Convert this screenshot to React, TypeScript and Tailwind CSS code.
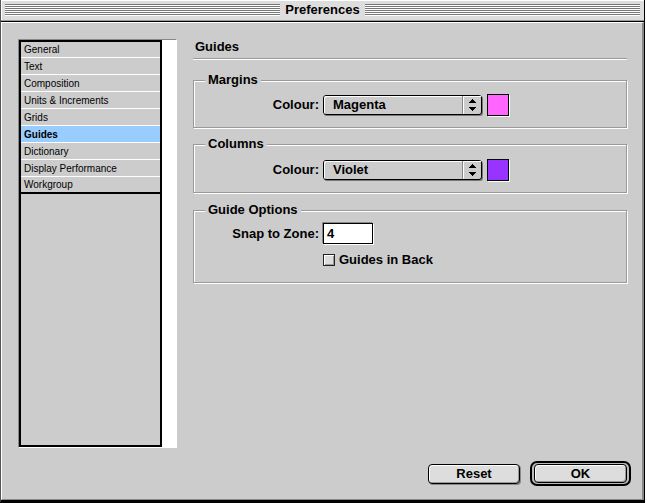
import React from "react";

const categories = [
  "General",
  "Text",
  "Composition",
  "Units & Increments",
  "Grids",
  "Guides",
  "Dictionary",
  "Display Performance",
  "Workgroup",
];

// striped filler of the title bar
function Stripes() {
  return (
    <div className="flex-1 flex flex-col">
      {[0, 1, 2, 3, 4, 5].map((i) => (
        <div key={i} className="h-[2px] border-t border-[#777777] bg-white" />
      ))}
    </div>
  );
}

function PopupArrows() {
  return (
    <svg width="7" height="12" viewBox="0 0 7 12" shapeRendering="crispEdges">
      <path d="M3 0h1v1h1v1h1v1h1v1H0V3h1V2h1V1h1z" fill="#000" />
      <path d="M0 8h7v1H6v1H5v1H4v1H3v-1H2v-1H1V9H0z" fill="#000" />
    </svg>
  );
}

function Popup({ value }: { value: string }) {
  return (
    <div className="flex h-[20px] w-[159px] rounded-[3px] border border-black bg-[#cccccc] shadow-[1px_1px_0_#777777]">
      <div className="flex-1 flex items-center pl-[9px] rounded-l-[2px] shadow-[inset_1px_1px_0_#ffffff]">
        {value}
      </div>
      <div className="w-[19px] flex items-center justify-center border-l border-[#888888] shadow-[inset_1px_1px_0_#ffffff]">
        <PopupArrows />
      </div>
    </div>
  );
}

function GroupBox({
  label,
  className,
  children,
}: {
  label: string;
  className: string;
  children: React.ReactNode;
}) {
  return (
    <div
      className={`relative w-[434px] border border-[#999999] shadow-[inset_1px_1px_0_#ffffff,1px_1px_0_#ffffff] ${className}`}
    >
      {/* legend sits over the top rule */}
      <span className="absolute -top-[9px] left-[11px] bg-[#cccccc] px-[3px] leading-[16px]">
        {label}
      </span>
      {children}
    </div>
  );
}

function ColourRow({ value, swatch }: { value: string; swatch: string }) {
  return (
    <div className="flex items-center">
      <div className="w-[125px] text-right">Colour:</div>
      <div className="ml-[4px]">
        <Popup value={value} />
      </div>
      <div
        className={`ml-[5px] h-[22px] w-[22px] border border-black shadow-[1px_1px_0_#ffffff] ${swatch}`}
      />
    </div>
  );
}

export default function App() {
  return (
    <div className="w-[647px] h-[503px] bg-white font-['Liberation_Sans',Arial,sans-serif] text-black">
      <div className="w-[645px] h-[503px] flex flex-col border-l border-l-[#555555] border-r border-r-black border-b-[3px] border-b-black">
        {/* title bar */}
        <div className="h-[21px] flex items-center gap-[4px] px-[4px] bg-[#dddddd] border-b border-[#999999] shadow-[inset_1px_1px_0_#ffffff]">
          <Stripes />
          <div className="text-[13px] font-bold leading-[16px] px-[1px]">Preferences</div>
          <Stripes />
        </div>
        <div className="h-px bg-black" />

        {/* body */}
        <div className="flex-1 flex flex-col bg-[#cccccc] border-t border-l border-white border-r-2 border-r-[#888888] border-b border-b-[#888888] pl-[16px] pt-[16px] pr-[11px]">
          <div className="flex items-start">
            {/* category list */}
            <div className="flex h-[409px] w-[159px] border-t border-l border-[#888888] border-b border-r border-b-white border-r-white">
              <div className="w-[143px] h-full border-2 border-black bg-[#cccccc] text-[10px]">
                {categories.map((c, i) => (
                  <div
                    key={c}
                    className={`${i === 0 ? "h-[16px]" : "h-[17px]"} flex items-center pl-[3px] ${
                      i === categories.length - 1
                        ? "border-b-2 border-black"
                        : "border-b border-white"
                    } ${c === "Guides" ? "bg-[#99ccff] font-bold" : ""}`}
                  >
                    {c}
                  </div>
                ))}
              </div>
              <div className="w-[14px] h-full bg-white" />
            </div>

            {/* settings panel */}
            <div className="ml-[16px] flex flex-col text-[13px] font-bold">
              <div className="h-[16px] leading-[16px] pl-[2px]">Guides</div>
              <div className="mt-[3px] h-[2px] w-[434px] border-t border-[#999999] border-b border-b-white" />

              <GroupBox label="Margins" className="mt-[20px] h-[48px] pt-[13px]">
                <ColourRow value="Magenta" swatch="bg-[#ff66ff]" />
              </GroupBox>

              <GroupBox label="Columns" className="mt-[16px] h-[49px] pt-[14px]">
                <ColourRow value="Violet" swatch="bg-[#9933ff]" />
              </GroupBox>

              <GroupBox label="Guide Options" className="mt-[17px] h-[73px] pt-[12px]">
                <div className="flex items-center">
                  <div className="w-[125px] text-right">Snap to Zone:</div>
                  <div className="ml-[4px] h-[21px] w-[50px] border border-black bg-white pl-[3px] leading-[19px] font-bold shadow-[-1px_-1px_0_#888888,1px_1px_0_#ffffff]">
                    4
                  </div>
                </div>
                <div className="mt-[10px] flex items-center pl-[129px]">
                  <div className="h-[12px] w-[12px] border border-[#222222] bg-[#dddddd] shadow-[inset_1px_1px_0_#ffffff,inset_-1px_-1px_0_#999999]" />
                  <div className="ml-[4px] leading-[12px]">Guides in Back</div>
                </div>
              </GroupBox>
            </div>
          </div>

          {/* buttons */}
          <div className="mt-[13px] flex items-center justify-end gap-[10px] text-[13px] font-bold">
            <div className="h-[20px] w-[92px] flex items-center justify-center rounded-[4px] border border-black bg-[#dddddd] shadow-[inset_1px_1px_0_#ffffff,inset_-1px_-1px_0_#999999,1px_1px_0_#888888]">
              Reset
            </div>
            <div className="h-[25px] w-[101px] flex items-center justify-center rounded-[7px] border-2 border-black bg-[#bbbbbb] px-[2px] py-[1px]">
              <div className="h-[19px] w-full flex items-center justify-center rounded-[4px] border border-black bg-[#dddddd] shadow-[inset_1px_1px_0_#ffffff,inset_-1px_-1px_0_#999999]">
                OK
              </div>
            </div>
          </div>
        </div>
      </div>
    </div>
  );
}
